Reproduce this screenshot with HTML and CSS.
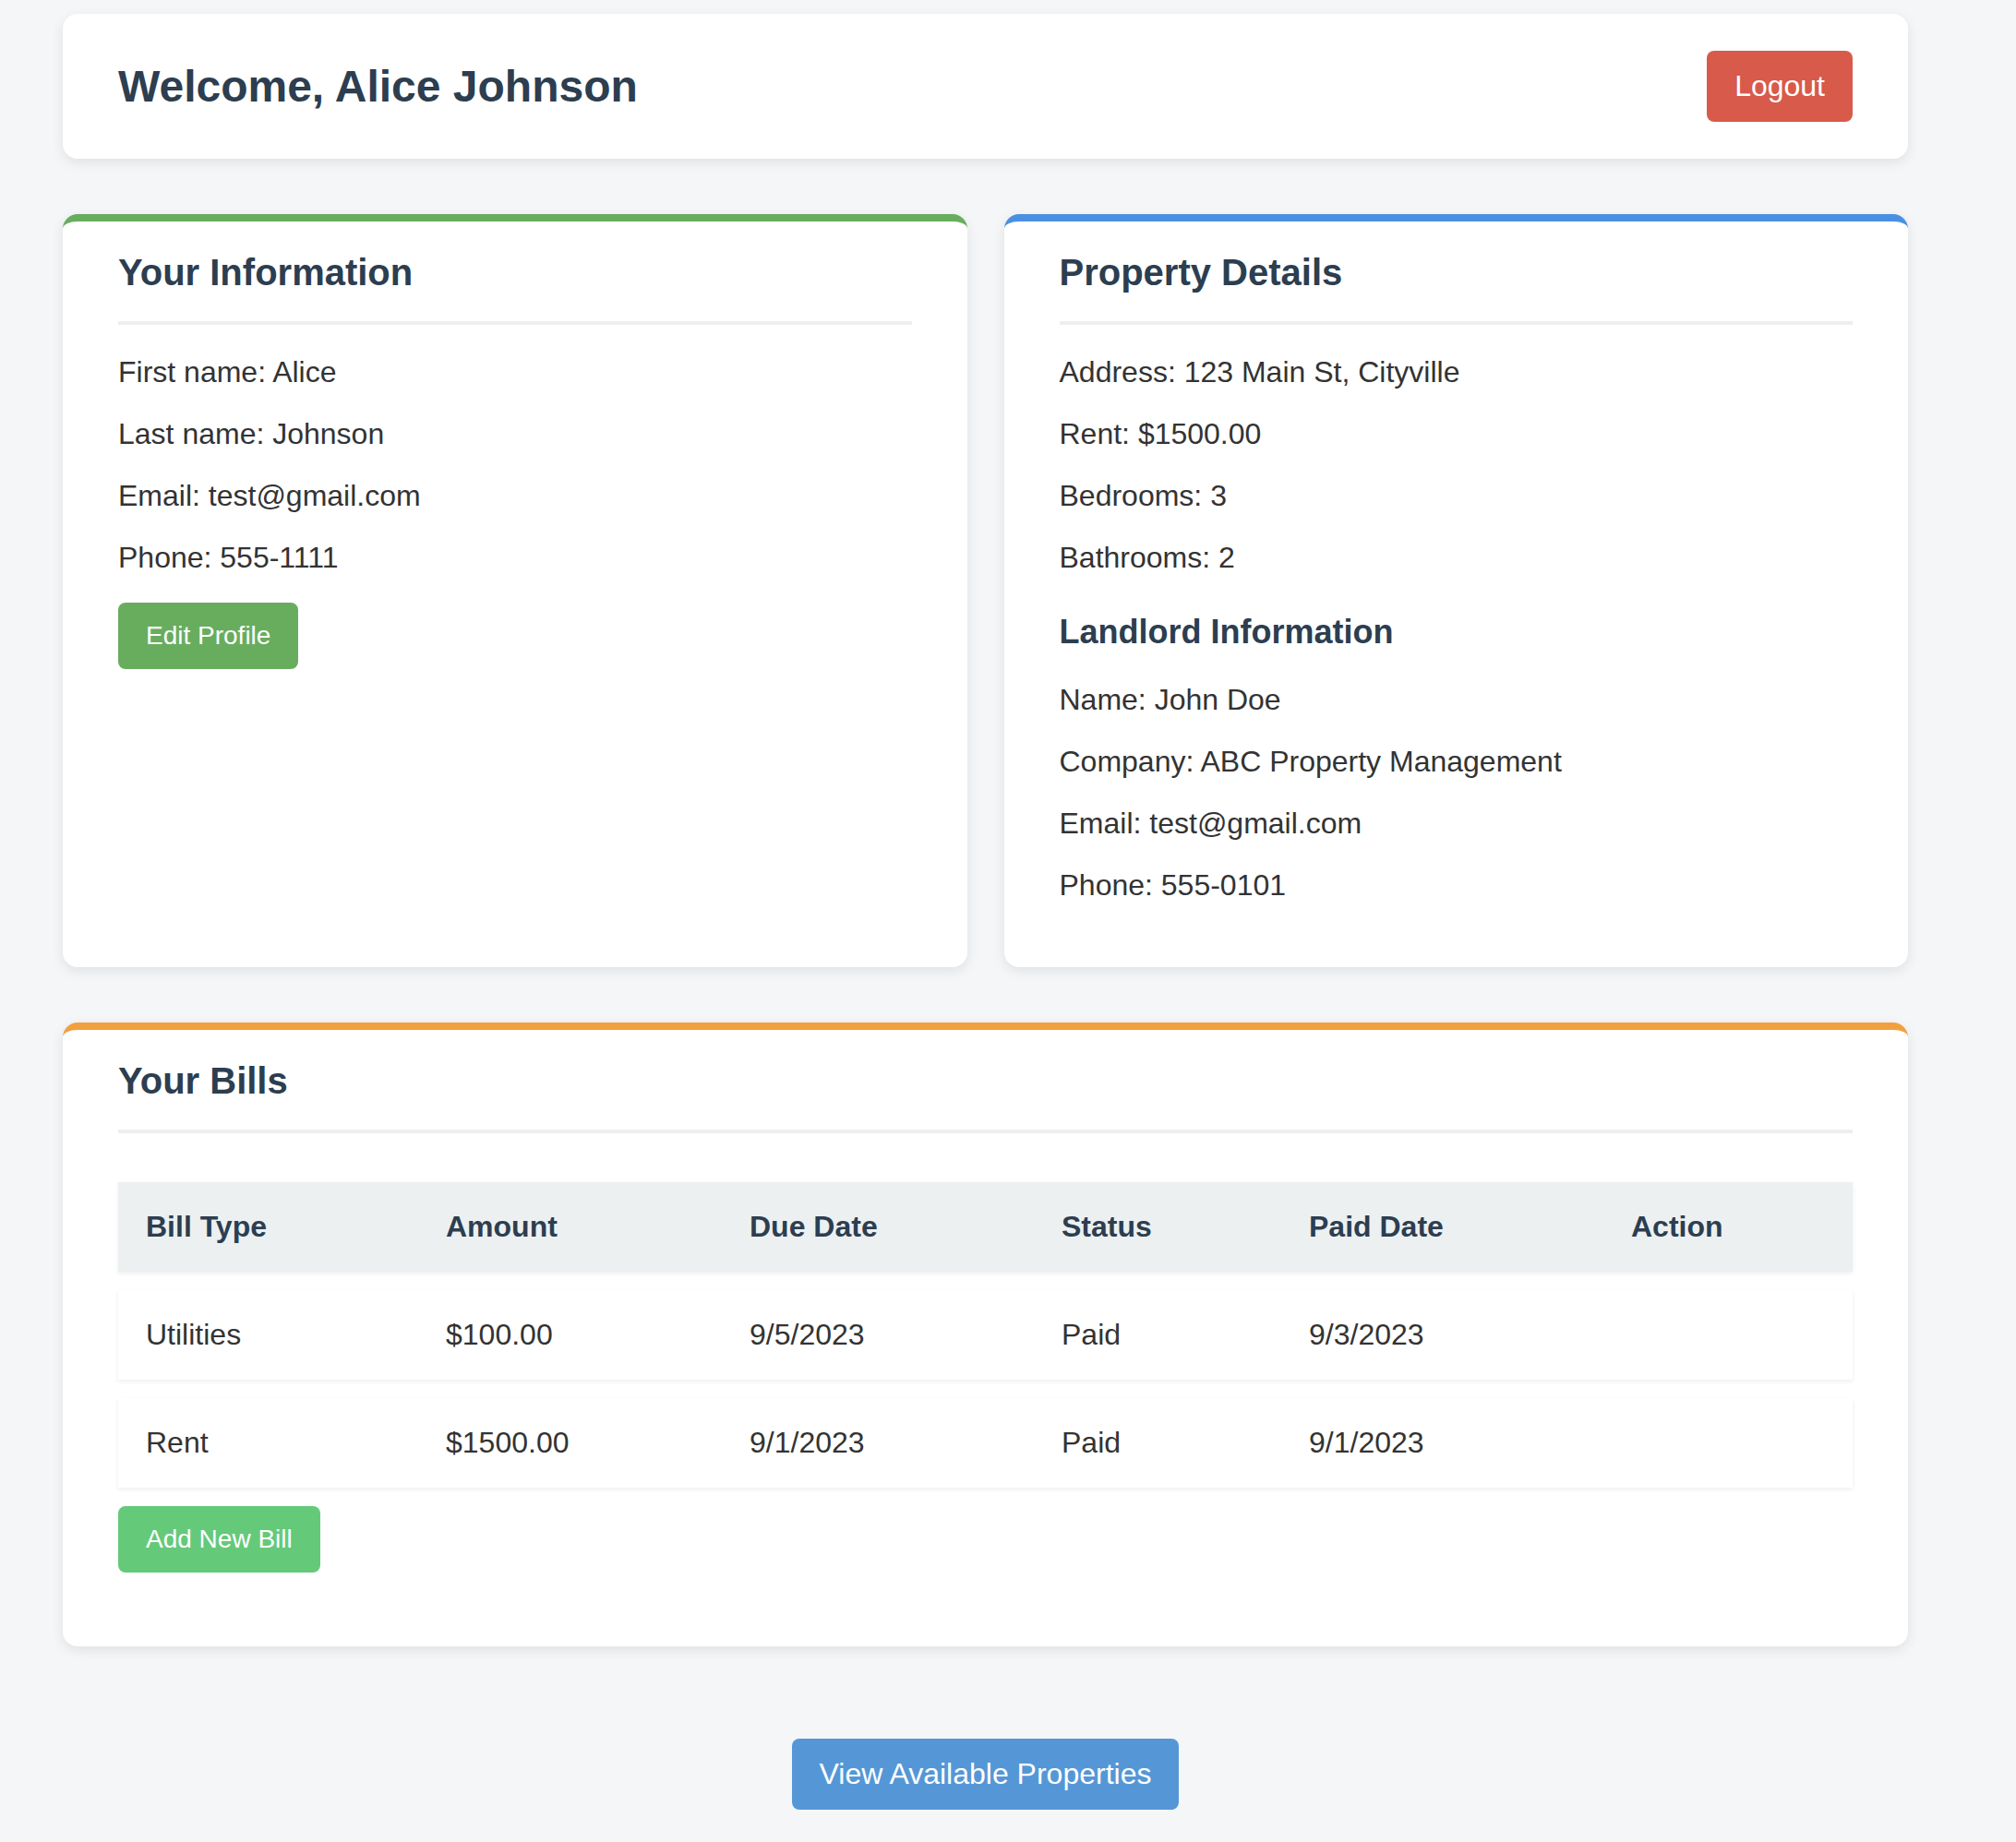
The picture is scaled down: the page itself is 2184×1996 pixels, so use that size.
FILE: index.html
```html
<!DOCTYPE html>
<html lang="en">
<head>
<meta charset="utf-8">
<title>Tenant Dashboard</title>
<link rel="stylesheet" href="styles.css">
</head>
<body>
<div class="page">
  <header class="topbar">
    <h1>Welcome, Alice Johnson</h1>
    <button class="btn btn-logout">Logout</button>
  </header>

  <div class="cards">
    <section class="card card-green">
      <h2>Your Information</h2>
      <p>First name: Alice</p>
      <p>Last name: Johnson</p>
      <p>Email: test@gmail.com</p>
      <p>Phone: 555-1111</p>
      <button class="btn btn-small btn-edit">Edit Profile</button>
    </section>

    <section class="card card-blue">
      <h2>Property Details</h2>
      <p>Address: 123 Main St, Cityville</p>
      <p>Rent: $1500.00</p>
      <p>Bedrooms: 3</p>
      <p>Bathrooms: 2</p>
      <h3>Landlord Information</h3>
      <p>Name: John Doe</p>
      <p>Company: ABC Property Management</p>
      <p>Email: test@gmail.com</p>
      <p>Phone: 555-0101</p>
    </section>
  </div>

  <section class="card card-orange card-bills">
    <h2>Your Bills</h2>
    <div class="bills">
      <div class="bill-row bill-head">
        <div>Bill Type</div><div>Amount</div><div>Due Date</div><div>Status</div><div>Paid Date</div><div>Action</div>
      </div>
      <div class="bill-row">
        <div>Utilities</div><div>$100.00</div><div>9/5/2023</div><div>Paid</div><div>9/3/2023</div><div></div>
      </div>
      <div class="bill-row">
        <div>Rent</div><div>$1500.00</div><div>9/1/2023</div><div>Paid</div><div>9/1/2023</div><div></div>
      </div>
    </div>
    <button class="btn btn-small btn-add">Add New Bill</button>
  </section>

  <div class="footer-actions">
    <button class="btn btn-view">View Available Properties</button>
  </div>
</div>
</body>
</html>
```

FILE: styles.css
```css
html, body {
  margin: 0;
  padding: 0;
}

body {
  background: #f4f6f8;
  font-family: "Liberation Sans", Arial, Helvetica, sans-serif;
  color: #333333;
}

.page {
  width: 1999px;
  margin-left: 68px;
  padding: 15px 0 40px;
}

.topbar {
  background: #ffffff;
  border-radius: 16px;
  box-shadow: 0 4px 14px rgba(0, 0, 0, 0.09);
  height: 157px;
  box-sizing: border-box;
  padding: 0 60px;
  display: flex;
  align-items: center;
  justify-content: space-between;
  margin-bottom: 60px;
}

.topbar h1 {
  margin: 0;
  font-size: 48px;
  font-weight: bold;
  color: #2c3e50;
}

.btn {
  border: none;
  border-radius: 8px;
  color: #ffffff;
  font-family: "Liberation Sans", Arial, Helvetica, sans-serif;
  font-size: 32px;
  line-height: 37px;
  padding: 20px 30px;
  cursor: pointer;
}

.btn-small {
  font-size: 28px;
  line-height: 32px;
}

.btn-logout {
  background: #d85a4a;
}

.btn-edit {
  background: #68ad5e;
}

.btn-add {
  background: #65c97a;
}

.btn-view {
  background: #5597d6;
}

.cards {
  display: grid;
  grid-template-columns: 1fr 1fr;
  gap: 40px;
  margin-bottom: 60px;
}

.card {
  background: #ffffff;
  border-radius: 16px;
  border-top: 8px solid transparent;
  box-shadow: 0 4px 14px rgba(0, 0, 0, 0.09);
  padding: 33px 60px 40px;
}

.card-green {
  border-top-color: #68ad5e;
}

.card-blue {
  border-top-color: #4a90e2;
}

.card-orange {
  border-top-color: #f2a03f;
}

.card h2 {
  margin: 0 0 33px;
  padding-bottom: 30px;
  border-bottom: 4px solid #eceef0;
  font-size: 40px;
  font-weight: bold;
  color: #2c3e50;
}

.card h3 {
  margin: 41px 0 34px;
  font-size: 36px;
  font-weight: bold;
  color: #2c3e50;
}

.card p {
  margin: 30px 0;
  font-size: 32px;
  line-height: 37px;
}

.card-bills {
  padding-bottom: 80px;
}

.bills {
  display: flex;
  flex-direction: column;
  gap: 20px;
  padding: 20px 0;
}

.bill-row {
  display: grid;
  grid-template-columns: 325px 329px 338px 268px 349px 1fr;
  background: #ffffff;
  box-shadow: 0 2px 5px rgba(0, 0, 0, 0.07);
  font-size: 32px;
  line-height: 37px;
}

.bill-row > div {
  padding: 30px;
}

.bill-head {
  background: #ecf0f1;
  font-weight: bold;
  color: #2c3e50;
}

.footer-actions {
  display: flex;
  justify-content: center;
  margin-top: 100px;
}
```
